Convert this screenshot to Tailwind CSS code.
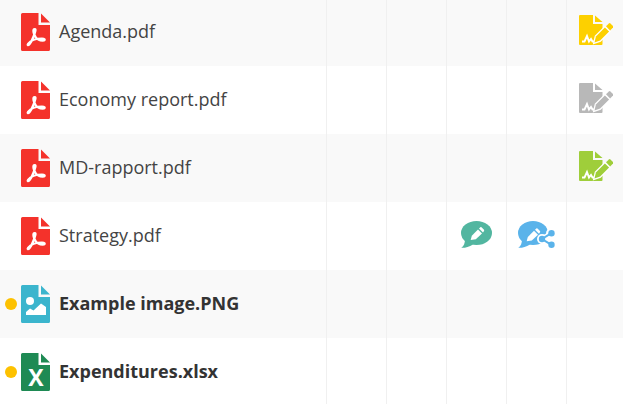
<!DOCTYPE html>
<html lang="en">
<head>
    <meta charset="UTF-8">
    <title>Documents</title>
    <script src="https://cdn.jsdelivr.net/npm/@tailwindcss/browser@4"></script>
</head>
<body class="bg-white overflow-hidden font-['Open_Sans',sans-serif] text-[18px] text-[#444]">
    <!-- Shared icon shapes -->
    <svg class="hidden">
        <defs>
            <g id="doc">
                <path fill="currentColor" d="M1.500 0H17.500V12H29V36.500A1.500 1.500 0 0 1 27.500 38H1.500A1.500 1.500 0 0 1 0 36.500V1.500A1.500 1.500 0 0 1 1.500 0Z"/>
                <path fill="currentColor" d="M20 0.500L29 9.500H20Z"/>
            </g>
            <g id="pdf">
                <use href="#doc"/>
                <path fill="none" stroke="#fff" stroke-width="2.200" d="M13.500 16C12 16 12 19 13.500 22C15 26 19 28 23 27.500C24.500 27 23.500 25.500 21 25.500C16 25.500 10 27 7 31C6 32.500 7.500 32.500 9 30.500C11 28 14 20 14.500 17.500C14.700 16 14 16 13.500 16Z"/>
            </g>
            <g id="sign">
                <path fill="currentColor" d="M1 0H14V9H23.500V29A1 1 0 0 1 22.500 30H1A1 1 0 0 1 0 29V1A1 1 0 0 1 1 0Z"/>
                <path fill="currentColor" d="M16 0.500L23.500 7H16Z"/>
                <path fill="none" stroke="#fff" stroke-width="1.900" d="M3 26.500H5.500L8 21L10 26.500L12 24L13.500 26.500H15"/>
                <path fill="currentColor" stroke="#fff" stroke-width="2.500" d="M15.500 27.500L16.900 21.400L25.900 12.400L30.100 16.600L21.100 25.600Z"/>
                <path fill="currentColor" d="M15.500 27.500L16.900 21.400L25.900 12.400L30.100 16.600L21.100 25.600Z"/>
                <path fill="currentColor" d="M27 11.300L29.900 8.400A1.200 1.200 0 0 1 31.400 8.400L34 11A1.200 1.200 0 0 1 34 12.600L31.100 15.500Z"/>
            </g>
        </defs>
    </svg>

    <div class="-mt-[2px]">
        <!-- Agenda.pdf -->
        <div class="grid grid-cols-[326px_60px_60px_60px_60px_57px] h-[68px] bg-[#f9f9f9]">
            <div class="flex items-center pl-[21px] gap-[9px]">
                <svg class="w-[29px] h-[38px] text-[#f4322b]" viewBox="0 0 29 38"><use href="#pdf"/></svg>
                <span class="pb-[2px]">Agenda.pdf</span>
            </div>
            <div class="border-l border-[#f0f0f0]"></div>
            <div class="border-l border-[#f0f0f0]"></div>
            <div class="border-l border-[#f0f0f0]"></div>
            <div class="border-l border-[#f0f0f0]"></div>
            <div class="border-l border-[#f0f0f0] flex items-center pl-[12px] pb-[4px]">
                <svg class="w-[34px] h-[30px] text-[#fdd000]" viewBox="0 0 34 30"><use href="#sign"/></svg>
            </div>
        </div>

        <!-- Economy report.pdf -->
        <div class="grid grid-cols-[326px_60px_60px_60px_60px_57px] h-[68px] bg-white">
            <div class="flex items-center pl-[21px] gap-[9px]">
                <svg class="w-[29px] h-[38px] text-[#f4322b]" viewBox="0 0 29 38"><use href="#pdf"/></svg>
                <span class="pb-[2px]">Economy report.pdf</span>
            </div>
            <div class="border-l border-[#f0f0f0]"></div>
            <div class="border-l border-[#f0f0f0]"></div>
            <div class="border-l border-[#f0f0f0]"></div>
            <div class="border-l border-[#f0f0f0]"></div>
            <div class="border-l border-[#f0f0f0] flex items-center pl-[12px] pb-[4px]">
                <svg class="w-[34px] h-[30px] text-[#b8b8b8]" viewBox="0 0 34 30"><use href="#sign"/></svg>
            </div>
        </div>

        <!-- MD-rapport.pdf -->
        <div class="grid grid-cols-[326px_60px_60px_60px_60px_57px] h-[68px] bg-[#f9f9f9]">
            <div class="flex items-center pl-[21px] gap-[9px]">
                <svg class="w-[29px] h-[38px] text-[#f4322b]" viewBox="0 0 29 38"><use href="#pdf"/></svg>
                <span class="pb-[2px]">MD-rapport.pdf</span>
            </div>
            <div class="border-l border-[#f0f0f0]"></div>
            <div class="border-l border-[#f0f0f0]"></div>
            <div class="border-l border-[#f0f0f0]"></div>
            <div class="border-l border-[#f0f0f0]"></div>
            <div class="border-l border-[#f0f0f0] flex items-center pl-[12px] pb-[4px]">
                <svg class="w-[34px] h-[30px] text-[#9fce3a]" viewBox="0 0 34 30"><use href="#sign"/></svg>
            </div>
        </div>

        <!-- Strategy.pdf -->
        <div class="grid grid-cols-[326px_60px_60px_60px_60px_57px] h-[68px] bg-white">
            <div class="flex items-center pl-[21px] gap-[9px]">
                <svg class="w-[29px] h-[38px] text-[#f4322b]" viewBox="0 0 29 38"><use href="#pdf"/></svg>
                <span class="pb-[2px]">Strategy.pdf</span>
            </div>
            <div class="border-l border-[#f0f0f0]"></div>
            <div class="border-l border-[#f0f0f0]"></div>
            <div class="border-l border-[#f0f0f0] flex items-center pl-[14px] pb-[3px]">
                <svg class="w-[31px] h-[27px]" viewBox="0 0 31 27">
                    <ellipse cx="15.500" cy="12" rx="15.500" ry="12" fill="#52b6a0"/>
                    <path fill="#52b6a0" d="M0.300 26.800C3 25 4 22 4 18L12 23.500C8 26 4 27 0.300 26.800Z"/>
                    <path fill="#fff" d="M9.700 19L10.800 14.700L17 8.500L21 12.500L14.800 18.300Z"/>
                    <path fill="#fff" d="M18 7.500L19.300 6.200A1 1 0 0 1 20.500 6.200L23 8.700A1 1 0 0 1 23 9.900L22 11.500Z"/>
                </svg>
            </div>
            <div class="border-l border-[#f0f0f0] flex items-center pl-[11px] pb-[3px]">
                <svg class="w-[37px] h-[27px]" viewBox="0 0 37 27">
                    <ellipse cx="15" cy="12" rx="15" ry="12" fill="#5ab3ea"/>
                    <path fill="#5ab3ea" d="M0.300 26.800C3 25 4 22 4 18L12 23.500C8 26 4 27 0.300 26.800Z"/>
                    <path fill="#fff" d="M8.700 20.300L9.800 16L16 9.800L20 13.800L13.800 19.600Z"/>
                    <path fill="#fff" d="M17 8.800L18.300 7.500A1 1 0 0 1 19.500 7.500L22 10A1 1 0 0 1 22 11.200L21 12.800Z"/>
                    <!-- share nodes with a white halo where they cut into the bubble -->
                    <circle cx="24" cy="18" r="5" fill="#fff"/>
                    <path fill="none" stroke="#fff" stroke-width="5" d="M33 12.300L24 18L33 23.700"/>
                    <circle cx="33" cy="12.300" r="5" fill="#fff"/>
                    <path fill="none" stroke="#5ab3ea" stroke-width="2" d="M33 12.300L24 18L33 23.700"/>
                    <circle cx="33.500" cy="12.300" r="3.200" fill="#5ab3ea"/>
                    <circle cx="33.500" cy="23.700" r="3.200" fill="#5ab3ea"/>
                    <circle cx="24" cy="18" r="3.200" fill="#5ab3ea"/>
                </svg>
            </div>
            <div class="border-l border-[#f0f0f0]"></div>
        </div>

        <!-- Example image.PNG -->
        <div class="grid grid-cols-[326px_60px_60px_60px_60px_57px] h-[68px] bg-[#f9f9f9]">
            <div class="flex items-center pl-[5px]">
                <span class="w-3 h-3 rounded-full bg-[#fdc100] mr-[4px]"></span>
                <svg class="w-[29px] h-[38px] text-[#3bb5cd] mr-[9px]" viewBox="0 0 29 38">
                    <use href="#doc"/>
                    <circle cx="9" cy="16" r="4" fill="#fff"/>
                    <path fill="#fff" d="M5 30V27L9 23.500L12.500 25.500L20 18.500L25 22V30Z"/>
                </svg>
                <span class="font-bold text-[#333] pb-[2px]">Example image.PNG</span>
            </div>
            <div class="border-l border-[#f0f0f0]"></div>
            <div class="border-l border-[#f0f0f0]"></div>
            <div class="border-l border-[#f0f0f0]"></div>
            <div class="border-l border-[#f0f0f0]"></div>
            <div class="border-l border-[#f0f0f0]"></div>
        </div>

        <!-- Expenditures.xlsx -->
        <div class="grid grid-cols-[326px_60px_60px_60px_60px_57px] h-[68px] bg-white">
            <div class="flex items-center pl-[5px]">
                <span class="w-3 h-3 rounded-full bg-[#fdc100] mr-[4px]"></span>
                <svg class="w-[29px] h-[38px] text-[#1e8a54] mr-[9px] overflow-visible" viewBox="0 0 29 38">
                    <use href="#doc"/>
                    <text x="14.800" y="33" text-anchor="middle" font-size="23" font-weight="700" font-family="Open Sans, sans-serif" fill="#fff">X</text>
                </svg>
                <span class="font-bold text-[#333] pb-[2px]">Expenditures.xlsx</span>
            </div>
            <div class="border-l border-[#f0f0f0]"></div>
            <div class="border-l border-[#f0f0f0]"></div>
            <div class="border-l border-[#f0f0f0]"></div>
            <div class="border-l border-[#f0f0f0]"></div>
            <div class="border-l border-[#f0f0f0]"></div>
        </div>
    </div>
</body>
</html>
